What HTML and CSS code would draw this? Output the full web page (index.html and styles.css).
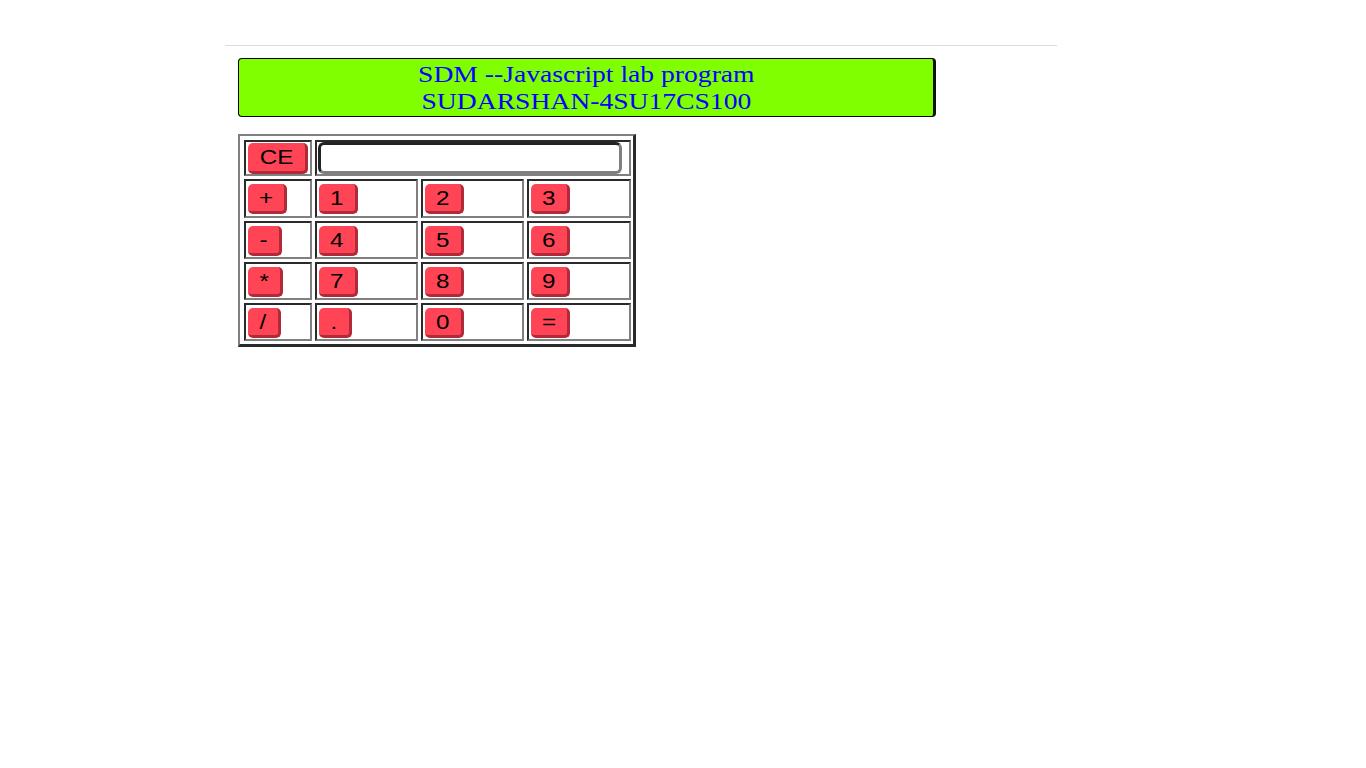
FILE: index.html
```html
<!DOCTYPE html>
<html>
<head>
<meta charset="utf-8">
<title>Calculator</title>
<link rel="stylesheet" href="styles.css">
</head>
<body>
<div class="page">
  <div class="rule"></div>
  <div class="content">
    <div class="banner">
      <div class="banner-line"><span class="wide">SDM --Javascript lab program</span></div>
      <div class="banner-line"><span class="wide">SUDARSHAN-4SU17CS100</span></div>
    </div>
    <div class="calc">
      <div class="cell"><button class="btn btn-ce"><span class="wide">CE</span></button></div>
      <div class="cell cell-display"><input class="display" type="text"></div>

      <div class="cell"><button class="btn"><span class="wide">+</span></button></div>
      <div class="cell"><button class="btn"><span class="wide">1</span></button></div>
      <div class="cell"><button class="btn"><span class="wide">2</span></button></div>
      <div class="cell"><button class="btn"><span class="wide">3</span></button></div>

      <div class="cell"><button class="btn"><span class="wide">-</span></button></div>
      <div class="cell"><button class="btn"><span class="wide">4</span></button></div>
      <div class="cell"><button class="btn"><span class="wide">5</span></button></div>
      <div class="cell"><button class="btn"><span class="wide">6</span></button></div>

      <div class="cell"><button class="btn"><span class="wide">*</span></button></div>
      <div class="cell"><button class="btn"><span class="wide">7</span></button></div>
      <div class="cell"><button class="btn"><span class="wide">8</span></button></div>
      <div class="cell"><button class="btn"><span class="wide">9</span></button></div>

      <div class="cell"><button class="btn"><span class="wide">/</span></button></div>
      <div class="cell"><button class="btn"><span class="wide">.</span></button></div>
      <div class="cell"><button class="btn"><span class="wide">0</span></button></div>
      <div class="cell"><button class="btn"><span class="wide">=</span></button></div>
    </div>
  </div>
</div>
</body>
</html>
```
FILE: styles.css
```css
html, body {
  margin: 0;
  padding: 0;
  background: #ffffff;
}

.page {
  margin-left: 225px;
  width: 832px;
}

.rule {
  margin-top: 45px;
  height: 1px;
  background: #dddddd;
}

.content {
  padding-left: 13px;
}

.banner {
  margin-top: 12px;
  width: 698px;
  height: 59px;
  box-sizing: border-box;
  border: 1px solid #000000;
  border-right: 3px solid #111111;
  border-radius: 4px;
  background: #80ff00;
  padding-top: 2px;
  text-align: center;
  font-family: "Liberation Serif", "Times New Roman", serif;
  font-size: 24px;
  line-height: 26.5px;
  color: #0000ff;
}

.banner-line {
  white-space: nowrap;
}

.wide {
  display: inline-block;
  transform: scaleX(1.15);
}

.calc {
  margin-top: 17px;
  display: grid;
  width: max-content;
  grid-template-columns: 68px 103px 103px 104px;
  grid-template-rows: 36px 39px 38px 38px 38px;
  gap: 3px;
  padding: 4px 2px 3px 4px;
  border-top: 2px solid #808080;
  border-left: 2px solid #808080;
  border-right: 3px solid #2a2a2a;
  border-bottom: 3px solid #2a2a2a;
  background: #ffffff;
}

.cell {
  box-sizing: border-box;
  display: flex;
  align-items: center;
  padding-left: 2px;
  border-top: 2px solid #2a2a2a;
  border-left: 2px solid #2a2a2a;
  border-right: 2px solid #808080;
  border-bottom: 2px solid #808080;
  background: #ffffff;
}

.cell-display {
  grid-column: 2 / 5;
  padding-left: 1px;
}

.btn {
  box-sizing: border-box;
  height: 30px;
  margin: 1px 0 0 0;
  padding: 0 12px;
  border: none;
  border-right: 3px solid #b02a3a;
  border-bottom: 3px solid #b02a3a;
  border-radius: 5px;
  background: #ff4455;
  color: #000000;
  font-family: "Liberation Sans", Arial, sans-serif;
  font-size: 21px;
  line-height: 27px;
}

.btn-ce {
  height: 31px;
  padding: 0 14px;
  margin: 0;
}

.display {
  box-sizing: border-box;
  width: 304px;
  height: 32px;
  margin: 0;
  padding: 0 4px;
  border-top: 3px solid #222222;
  border-left: 3px solid #222222;
  border-right: 3px solid #808080;
  border-bottom: 3px solid #808080;
  border-radius: 6px;
  background: #ffffff;
  font-family: "Liberation Sans", Arial, sans-serif;
  font-size: 18px;
  outline: none;
}
```
